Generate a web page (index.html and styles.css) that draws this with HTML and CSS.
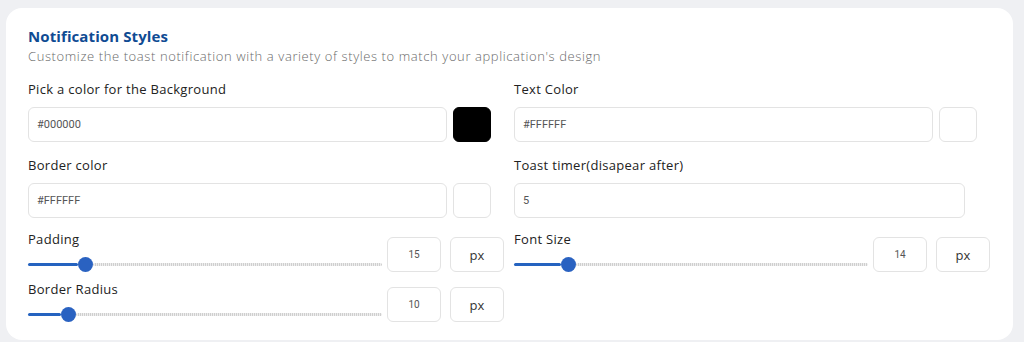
FILE: index.html
```html
<!DOCTYPE html>
<html lang="en">
<head>
    <meta charset="UTF-8">
    <meta name="viewport" content="width=device-width, initial-scale=1.0">
    <title>Notification Styles</title>
    <link rel="stylesheet" href="styles.css">
</head>
<body>
    <div class="card">
        <h2 class="title">Notification Styles</h2>
        <p class="subtitle">Customize the toast notification with a variety of styles to match your application's design</p>

        <div class="grid">
            <div class="field">
                <label>Pick a color for the Background</label>
                <div class="color-row">
                    <input type="text" class="text-input color-input" value="#000000">
                    <span class="swatch swatch-black"></span>
                </div>
            </div>
            <div class="field">
                <label>Text Color</label>
                <div class="color-row">
                    <input type="text" class="text-input color-input" value="#FFFFFF">
                    <span class="swatch"></span>
                </div>
            </div>

            <div class="field">
                <label>Border color</label>
                <div class="color-row">
                    <input type="text" class="text-input color-input" value="#FFFFFF">
                    <span class="swatch"></span>
                </div>
            </div>
            <div class="field">
                <label>Toast timer(disapear after)</label>
                <input type="text" class="text-input timer-input" value="5">
            </div>

            <div class="range-field">
                <div class="range-left">
                    <label>Padding</label>
                    <div class="slider">
                        <span class="fill" style="width: 50px"></span>
                        <span class="thumb"></span>
                        <span class="rest"></span>
                    </div>
                </div>
                <div class="num-box">15</div>
                <div class="unit-box">px</div>
            </div>
            <div class="range-field">
                <div class="range-left">
                    <label>Font Size</label>
                    <div class="slider">
                        <span class="fill" style="width: 47px"></span>
                        <span class="thumb"></span>
                        <span class="rest"></span>
                    </div>
                </div>
                <div class="num-box">14</div>
                <div class="unit-box">px</div>
            </div>

            <div class="range-field">
                <div class="range-left">
                    <label>Border Radius</label>
                    <div class="slider">
                        <span class="fill" style="width: 33px"></span>
                        <span class="thumb"></span>
                        <span class="rest"></span>
                    </div>
                </div>
                <div class="num-box">10</div>
                <div class="unit-box">px</div>
            </div>
        </div>
    </div>
</body>
</html>
```

FILE: styles.css
```css
body {
    margin: 0;
    padding: 8px 11px 0 6px;
    background-color: #eff0f3;
    font-family: "Open Sans", Arial, sans-serif;
    color: #222;
}
.card {
    background-color: #ffffff;
    border-radius: 16px;
    padding: 18px 22px 20px 22px;
    box-sizing: border-box;
    height: 332px;
}
.title {
    margin: 0;
    font-size: 15px;
    font-weight: 700;
    color: #0f4b93;
    line-height: 20px;
    letter-spacing: 0.1px;
}
.subtitle {
    margin: 0;
    font-size: 13px;
    font-weight: 300;
    color: #6a6a6a;
    line-height: 20px;
    letter-spacing: 0.6px;
}
.grid {
    display: grid;
    grid-template-columns: 476px 476px;
    column-gap: 10px;
    margin-top: 14px;
}
.field label,
.range-left label {
    display: block;
    font-size: 13px;
    font-weight: 500;
    color: #222;
    line-height: 18px;
    letter-spacing: 0.3px;
}
.field label {
    margin-bottom: 9px;
}
.field {
    margin-bottom: 14px;
}
.color-row {
    display: flex;
    gap: 6px;
}
.text-input {
    box-sizing: border-box;
    height: 35px;
    border: 1px solid #e3e3e3;
    border-radius: 6px;
    padding: 0 8px;
    font-family: Roboto, Arial, sans-serif;
    font-size: 11px;
    color: #555;
    outline: none;
}
.color-input {
    width: 419px;
}
.timer-input {
    width: 451px;
}
.swatch {
    box-sizing: border-box;
    width: 38px;
    height: 35px;
    border: 1px solid #e3e3e3;
    border-radius: 6px;
    background-color: #ffffff;
}
.swatch-black {
    background-color: #000000;
    border-color: #000000;
}
.range-field {
    display: flex;
    align-items: flex-start;
    height: 50px;
    margin-top: -2px;
    margin-bottom: 2px;
}
.range-left {
    width: 354px;
}
.slider {
    display: flex;
    align-items: center;
    height: 14px;
    margin-top: 9px;
}
.fill {
    height: 3px;
    background-color: #2563c0;
    border-radius: 2px;
}
.thumb {
    width: 15px;
    height: 15px;
    border-radius: 50%;
    background-color: #2a62c1;
}
.rest {
    flex: 1;
    height: 3px;
    background: repeating-linear-gradient(90deg, #cfcfcf 0 1px, #eeeeee 1px 2px);
    border-radius: 2px;
}
.num-box,
.unit-box {
    box-sizing: border-box;
    height: 35px;
    margin-top: 7px;
    border: 1px solid #e3e3e3;
    border-radius: 6px;
    display: flex;
    align-items: center;
    justify-content: center;
}
.num-box {
    width: 54px;
    margin-left: 5px;
    font-family: Roboto, Arial, sans-serif;
    font-size: 10px;
    color: #555;
}
.unit-box {
    width: 54px;
    margin-left: 9px;
    font-size: 13px;
    color: #333;
}
```
